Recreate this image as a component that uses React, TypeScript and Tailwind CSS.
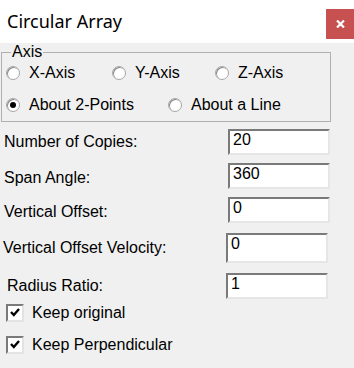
import type { ReactNode } from 'react'

const LABEL = 'text-[16px] leading-[18px] text-black'

function Radio({ checked, label, width }: { checked?: boolean; label: string; width?: string }) {
  return (
    <div className={'flex items-center ' + (width || '')}>
      <span className="w-[14px] h-[14px] rounded-full bg-white border border-[#a7a7a7] shadow-[inset_1px_1px_0_#8a8a8a] flex items-center justify-center shrink-0">
        {checked && <span className="w-[6px] h-[6px] rounded-full bg-black" />}
      </span>
      <span className={LABEL + ' ml-[9px]'}>{label}</span>
    </div>
  )
}

function Field({ value, h = 'h-[26px]', right = 'mr-[24px]' }: { value: string; h?: string; right?: string }) {
  return (
    <div
      className={
        'w-[102px] bg-white border-2 border-t-[#7a7a7a] border-l-[#7a7a7a] border-b-[#e6e6e6] border-r-[#e6e6e6] pl-[3px] pt-[1px] text-[16px] leading-[16px] text-black ' +
        h + ' ' + right
      }
    >
      {value}
    </div>
  )
}

function Row({ children, className }: { children: ReactNode; className: string }) {
  return <div className={'flex items-center justify-between ' + className}>{children}</div>
}

function Check({ label, className }: { label: string; className: string }) {
  return (
    <div className={'flex items-center pl-[6px] ' + className}>
      <span className="w-[18px] h-[18px] bg-white border-2 border-t-[#7a7a7a] border-l-[#7a7a7a] border-b-[#e3e3e3] border-r-[#e3e3e3] flex items-center justify-center shrink-0">
        <svg width="10" height="9" viewBox="0 0 10 9">
          <path d="M1 4 L3.8 7 L9 1" fill="none" stroke="#000" strokeWidth="2.4" />
        </svg>
      </span>
      <span className={LABEL + ' ml-[8px]'}>{label}</span>
    </div>
  )
}

export default function App() {
  return (
    <div className="w-[354px] h-[368px] bg-[#f0f0f0] overflow-hidden" style={{ fontFamily: '"Liberation Sans", Arial, sans-serif' }}>
      {/* title bar */}
      <div className="h-[43px] bg-white flex justify-between">
        <div className="pl-[7px] pt-[8px] text-[18px] leading-[26px] text-black" style={{ fontFamily: '"Noto Sans", "Open Sans", sans-serif' }}>
          Circular Array
        </div>
        <div className="mt-[9px] w-[28px] h-[30px] bg-[#c75050] flex items-center justify-center">
          <svg width="9" height="8" viewBox="0 0 9 8">
            <path d="M1 0.5 L8 7.5 M8 0.5 L1 7.5" stroke="#fff" strokeWidth="2.2" />
          </svg>
        </div>
      </div>

      {/* axis group */}
      <fieldset className="ml-[1px] w-[330px] border border-[#b0b0b0] pl-[4px] pb-[4px]">
        <legend className="ml-[5px] px-[1px] text-[16px] leading-[18px] text-black">Axis</legend>
        <div className="flex flex-col gap-[8px]">
          <div className="flex h-[24px]">
            <Radio label="X-Axis" width="w-[106px]" />
            <Radio label="Y-Axis" width="w-[103px]" />
            <Radio label="Z-Axis" />
          </div>
          <div className="flex h-[24px]">
            <Radio checked label="About 2-Points" width="w-[162px]" />
            <Radio label="About a Line" />
          </div>
        </div>
      </fieldset>

      {/* fields */}
      <Row className="mt-[7px] pl-[4px]">
        <span className={LABEL}>Number of Copies:</span>
        <Field value="20" />
      </Row>
      <Row className="mt-[8px] pl-[4px]">
        <span className={LABEL + ' mt-[4px]'}>Span Angle:</span>
        <Field value="360" />
      </Row>
      <Row className="mt-[8px] pl-[4px]">
        <span className={LABEL + ' mt-[4px]'}>Vertical Offset:</span>
        <Field value="0" />
      </Row>
      <Row className="mt-[10px] pl-[3px]">
        <span className={LABEL}>Vertical Offset Velocity:</span>
        <Field value="0" h="h-[30px]" right="mr-[26px]" />
      </Row>
      <Row className="mt-[10px] pl-[7px]">
        <span className={LABEL}>Radius Ratio:</span>
        <Field value="1" right="mr-[26px]" />
      </Row>
      <Check label="Keep original" className="mt-[4px] h-[19px]" />
      <Check label="Keep Perpendicular" className="mt-[13px] h-[19px]" />
    </div>
  )
}
